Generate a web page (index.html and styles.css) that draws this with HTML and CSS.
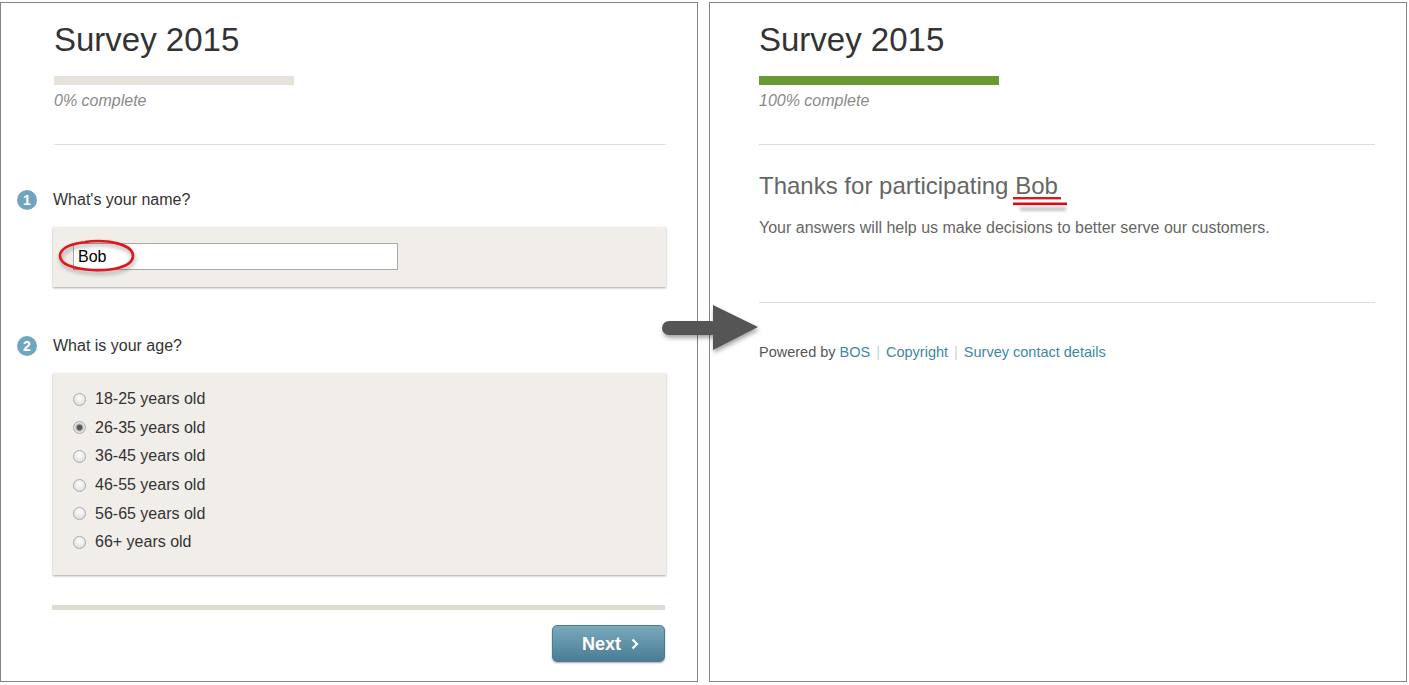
FILE: index.html
```html
<!DOCTYPE html>
<html lang="en">
<head>
    <meta charset="UTF-8">
    <title>Survey 2015</title>
    <link rel="stylesheet" href="styles.css">
</head>
<body>
    <div class="screens">
        <section class="panel panel-form">
            <h1 class="survey-title">Survey 2015</h1>
            <div class="progress"><div class="progress-fill" style="width: 0%"></div></div>
            <p class="progress-label">0% complete</p>
            <hr class="rule">

            <div class="question">
                <div class="question-head">
                    <span class="q-num">1</span>
                    <span class="q-text">What's your name?</span>
                </div>
                <div class="answer-card card-name">
                    <input type="text" class="text-input" value="Bob">
                </div>
            </div>

            <div class="question">
                <div class="question-head">
                    <span class="q-num">2</span>
                    <span class="q-text">What is your age?</span>
                </div>
                <div class="answer-card card-age">
                    <label class="choice"><input type="radio" name="age"> 18-25 years old</label>
                    <label class="choice"><input type="radio" name="age" checked> 26-35 years old</label>
                    <label class="choice"><input type="radio" name="age"> 36-45 years old</label>
                    <label class="choice"><input type="radio" name="age"> 46-55 years old</label>
                    <label class="choice"><input type="radio" name="age"> 56-65 years old</label>
                    <label class="choice"><input type="radio" name="age"> 66+ years old</label>
                </div>
            </div>

            <div class="form-bar"></div>
            <div class="form-actions">
                <button class="btn-next">Next
                    <svg class="chevron" width="8" height="12" viewBox="0 0 8 12"><polyline points="1.5,1.5 6,6 1.5,10.5" fill="none" stroke="#fff" stroke-width="2.2"/></svg>
                </button>
            </div>
        </section>

        <section class="panel panel-done">
            <h1 class="survey-title">Survey 2015</h1>
            <div class="progress"><div class="progress-fill" style="width: 100%"></div></div>
            <p class="progress-label">100% complete</p>
            <hr class="rule">

            <h2 class="thanks">Thanks for participating Bob</h2>
            <p class="thanks-text">Your answers will help us make decisions to better serve our customers.</p>
            <hr class="rule rule-foot">

            <p class="footer">Powered by <a href="#">BOS</a><span class="sep">|</span><a href="#">Copyright</a><span class="sep">|</span><a href="#">Survey contact details</a></p>
        </section>
    </div>

    <!-- annotations drawn over the screenshots -->
    <svg class="note note-circle" width="90" height="46" viewBox="0 0 90 46">
        <path d="M30 6 C 52 3, 78 8, 78 20 C 78 31, 56 35, 38 34 C 18 33, 5 28, 5 20 C 5 12, 16 7, 34 6" fill="none" stroke="#e0161b" stroke-width="2.6"/>
    </svg>
    <svg class="note note-underline" width="66" height="22" viewBox="0 0 66 22">
        <rect x="10" y="12" width="46" height="4" fill="#9a9a9a" opacity="0.55"/>
        <rect x="3" y="2" width="48" height="2.4" fill="#e0161b"/>
        <rect x="3" y="7.5" width="54" height="2.6" fill="#d01015"/>
    </svg>
    <svg class="note note-arrow" width="110" height="60" viewBox="0 0 110 60">
        <rect x="7" y="21" width="56" height="14" rx="7" fill="#555"/>
        <polygon points="58,5 58,50 103,27" fill="#555"/>
    </svg>
</body>
</html>
```

FILE: styles.css
```css
* {
    box-sizing: border-box;
}

body {
    margin: 0;
    position: relative;
    background: #fff;
    font-family: "Liberation Sans", Arial, sans-serif;
    color: #333;
}

.screens {
    display: flex;
    gap: 11px;
    padding-top: 2px;
}

.panel {
    width: 698px;
    height: 680px;
    border: 1px solid #858585;
    padding: 17px 31px 0 53px;
}

.panel-done {
    padding-left: 49px;
}

.survey-title {
    margin: 0;
    font-size: 33px;
    line-height: 40px;
    font-weight: normal;
    color: #333;
}

.progress {
    width: 240px;
    height: 9px;
    margin-top: 16px;
    background: #e6e1d9;
}

.progress-fill {
    height: 100%;
    background: #679a33;
}

.progress-label {
    margin: 6px 0 0;
    font-size: 16px;
    line-height: 20px;
    font-style: italic;
    color: #8a8a8a;
}

.rule {
    margin: 33px 0 0;
    border: 0;
    border-top: 1px solid #dddddd;
}

/* questions */
.question-head {
    display: flex;
    align-items: center;
    gap: 16px;
    margin: 45px 0 0 -37px;
    font-size: 16px;
    line-height: 20px;
}

.question + .question .question-head {
    margin-top: 49px;
}

.q-num {
    width: 20px;
    height: 20px;
    border-radius: 50%;
    background: #71a5be;
    color: #fff;
    font-weight: bold;
    font-size: 14px;
    line-height: 20px;
    text-align: center;
}

.answer-card {
    margin: 17px 0 0 -1px;
    background: #f1eeea;
    box-shadow: 0 1px 2px rgba(0, 0, 0, 0.35);
}

.card-name {
    padding: 16px 20px 17px;
}

.text-input {
    display: block;
    width: 325px;
    height: 27px;
    padding: 0 4px;
    border: 1px solid #a9a9a9;
    font-family: inherit;
    font-size: 16px;
    color: #000;
    background: #fff;
}

.card-age {
    padding: 12px 20px 18px;
}

.choice {
    display: flex;
    align-items: center;
    gap: 9px;
    height: 28.6px;
    font-size: 16px;
    color: #333;
}

.choice input {
    appearance: none;
    margin: 0;
    width: 13px;
    height: 13px;
    border: 1px solid #ababab;
    border-radius: 50%;
    background: radial-gradient(circle at 50% 35%, #ffffff, #d6d6d6);
}

.choice input:checked {
    background: radial-gradient(circle, #555 0 2.2px, #9a9a9a 3px, #e4e4e4 4.5px);
}

.form-bar {
    height: 5px;
    margin: 30px 1px 0 -2px;
    background: #dedbd3;
}

.form-actions {
    display: flex;
    justify-content: flex-end;
    margin: 15px 1px 0 0;
}

.btn-next {
    display: flex;
    align-items: center;
    justify-content: center;
    gap: 10px;
    width: 113px;
    height: 37px;
    padding: 2px 0 0 4px;
    border: 1px solid #4b7c92;
    border-radius: 5px;
    background: linear-gradient(#7aa9bc, #487d95);
    box-shadow: 0 1px 2px rgba(0, 0, 0, 0.35);
    color: #fff;
    font-family: inherit;
    font-size: 18px;
    font-weight: bold;
    cursor: pointer;
}

/* thank-you screen */
.thanks {
    margin: 27px 0 0;
    font-size: 24px;
    line-height: 28px;
    font-weight: normal;
    color: #666;
}

.thanks-text {
    margin: 18px 0 0;
    font-size: 16px;
    line-height: 20px;
    color: #666;
}

.rule-foot {
    margin-top: 64px;
}

.footer {
    margin: 40px 0 0;
    font-size: 14.5px;
    line-height: 18px;
    color: #555;
}

.footer a {
    color: #3d87a9;
    text-decoration: none;
}

.sep {
    margin: 0 6px;
    color: #c3d3dc;
}

/* annotations */
.note {
    position: absolute;
}

.note-circle {
    left: 55px;
    top: 236px;
    filter: drop-shadow(1px 3px 2px rgba(0, 0, 0, 0.35));
}

.note-underline {
    left: 1010px;
    top: 195px;
}

.note-underline rect:first-child {
    filter: blur(1.5px);
}

.note-arrow {
    left: 655px;
    top: 300px;
    filter: drop-shadow(1px 3px 2px rgba(0, 0, 0, 0.35));
}
```
